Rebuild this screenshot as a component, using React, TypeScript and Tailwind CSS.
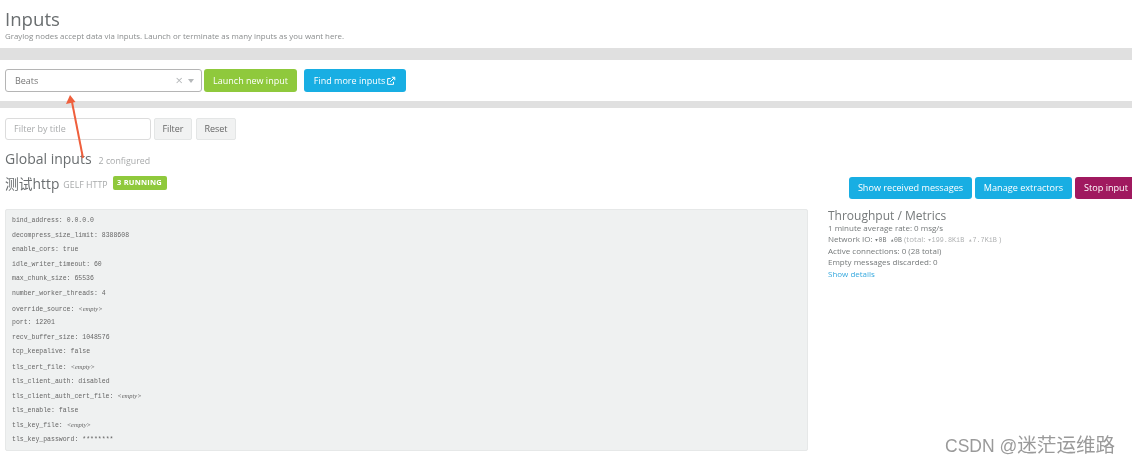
import React from "react";

const config: [string, string, boolean?][] = [
  ["bind_address", "0.0.0.0"],
  ["decompress_size_limit", "8388608"],
  ["enable_cors", "true"],
  ["idle_writer_timeout", "60"],
  ["max_chunk_size", "65536"],
  ["number_worker_threads", "4"],
  ["override_source", "<empty>", true],
  ["port", "12201"],
  ["recv_buffer_size", "1048576"],
  ["tcp_keepalive", "false"],
  ["tls_cert_file", "<empty>", true],
  ["tls_client_auth", "disabled"],
  ["tls_client_auth_cert_file", "<empty>", true],
  ["tls_enable", "false"],
  ["tls_key_file", "<empty>", true],
  ["tls_key_password", "********"],
];

export default function App() {
  return (
    <div className="relative w-[1132px] h-[464px] overflow-hidden bg-white text-[#6b6f70] font-['Open_Sans','Noto_Sans_CJK_SC',sans-serif] blur-[0.45px]">
      <div className="pl-[5px] pt-[8px] h-[48px]">
        <h1 className="text-[18.6px] leading-[22px] text-[#6a6e70]">Inputs</h1>
        <p className="text-[7.9px] leading-[11px] mt-[1px] text-[#8a8d8e]">
          Graylog nodes accept data via inputs. Launch or terminate as many inputs as you want here.
        </p>
      </div>
      <div className="h-[12px] bg-[#e0e0e0]" />
      <div className="flex items-center gap-[2px] pl-[5px] mt-[9px] h-[23px]">
        <div className="flex items-center w-[197px] h-[23px] border border-[#b5b5b5] rounded-[3px] bg-white pl-[9px] pr-[7px] text-[9px] text-[#777]">
          <span className="flex-1">Beats</span>
          <span className="text-[13px] leading-none text-[#b5b8ba] mr-[5px]">×</span>
          <span className="w-0 h-0 border-x-[3.5px] border-x-transparent border-t-[4px] border-t-[#b5b8ba]" />
        </div>
        <button className="w-[93px] h-[23px] rounded-[3px] bg-[#8fc93c] text-white text-[9px]">Launch new input</button>
        <button className="ml-[5px] flex items-center justify-center gap-[1px] w-[102px] h-[23px] rounded-[3px] bg-[#18aee3] text-white text-[9px]">
          Find more inputs
          <svg width="10" height="10" viewBox="0 0 24 24" fill="none" stroke="white" strokeWidth="2.4">
            <path d="M18 14v6H4V6h7" />
            <path d="M10 14L20 4M14 3h7v7" />
          </svg>
        </button>
      </div>
      <div className="h-[7px] mt-[9px] bg-[#e0e0e0]" />
      <div className="flex items-center gap-[3px] pl-[5px] mt-[10px] h-[22px]">
        <div className="flex items-center w-[146px] h-[22px] border border-[#dcdcdc] rounded-[3px] pl-[8px] text-[9px] text-[#a9abac]">
          Filter by title
        </div>
        <button className="w-[38px] h-[22px] rounded-[2px] border border-[#e4e6e6] bg-[#f1f2f2] text-[9px] text-[#666]">Filter</button>
        <button className="ml-[1px] w-[40px] h-[22px] rounded-[2px] border border-[#e4e6e6] bg-[#f1f2f2] text-[9px] text-[#666]">Reset</button>
      </div>
      <div className="flex items-baseline pl-[5px] mt-[9px] h-[20px]">
        <h2 className="text-[14px] leading-[20px] text-[#6a6e70]">Global inputs</h2>
        <span className="ml-[7px] text-[8.8px] text-[#a8aaab]">2 configured</span>
      </div>
      <div className="flex justify-between pl-[5px] mt-[6px] h-[35px]">
        <div className="flex items-start">
          <span className="text-[13.8px] leading-[18px] text-[#6a6e70]">测试http</span>
          <span className="ml-[4px] mt-[4px] text-[8.8px] leading-[12px] text-[#a8aaab]">GELF HTTP</span>
          <span className="ml-[5px] mt-[1px] flex items-center justify-center w-[54px] h-[14px] bg-[#8fc93c] rounded-[2px] text-white text-[7.5px] font-bold tracking-[0.2px]">
            3 RUNNING
          </span>
        </div>
        <div className="flex gap-[3px] mt-[2px] h-[22px] w-[283px] shrink-0 overflow-hidden">
          <button className="w-[123px] shrink-0 h-[22px] rounded-[3px] bg-[#18aee3] text-white text-[9.1px]">Show received messages</button>
          <button className="w-[97px] shrink-0 h-[22px] rounded-[3px] bg-[#18aee3] text-white text-[9.1px]">Manage extractors</button>
          <button className="w-[62px] shrink-0 h-[22px] rounded-[3px] bg-[#a0195f] text-white text-[9.1px]">Stop input</button>
        </div>
      </div>
      <div className="flex pl-[5px] mt-[-1px]">
        <div className="w-[803px] h-[242px] shrink-0 bg-[#eff1f1] border border-[#e6e8e8] rounded-[2px] pl-[6px] pt-[4px] font-['Liberation_Mono',monospace] text-[6.5px] leading-[14.6px] text-[#666]">
          {config.map(([k, v, em]) => (
            <div key={k} className="whitespace-pre h-[14.6px]">
              {k}: {em ? <em className="font-['Liberation_Serif',serif]">{v}</em> : v}
            </div>
          ))}
        </div>
        <div className="ml-[20px] text-[8px] leading-[11.4px] text-[#75797a]">
          <h3 className="text-[12px] leading-[14px] mb-[-1px]">Throughput / Metrics</h3>
          <div className="h-[11.4px]">1 minute average rate: 0 msg/s</div>
          <div className="h-[11.4px]">
            Network IO: <span className="font-['Liberation_Mono',monospace] text-[6.5px]">▾0B ▴0B</span>{" "}
            <span className="text-[#b0b2b3]">(total: <span className="font-['Liberation_Mono',monospace] text-[6.8px]">▾199.8KiB ▴7.7KiB</span> )</span>
          </div>
          <div className="h-[11.4px]">Active connections: 0 (28 total)</div>
          <div className="h-[11.4px]">Empty messages discarded: 0</div>
          <div className="text-[#37a9de]">Show details</div>
        </div>
      </div>
      <svg className="absolute left-[62px] top-[90px]" width="30" height="80" viewBox="0 0 30 80">
        <path d="M21 68L10 12" stroke="#ef5f3c" strokeWidth="2" fill="none" />
        <path d="M8 5L4 14L13.5 12Z" fill="#ef5f3c" />
      </svg>
      <div className="absolute left-[945px] top-[433px] leading-[24px] text-[#9a9a9a] font-['Liberation_Sans','Noto_Sans_CJK_SC',sans-serif] text-[17.5px] whitespace-nowrap">
        CSDN @<span className="text-[19.6px]">迷茫运维路</span>
      </div>
    </div>
  );
}
